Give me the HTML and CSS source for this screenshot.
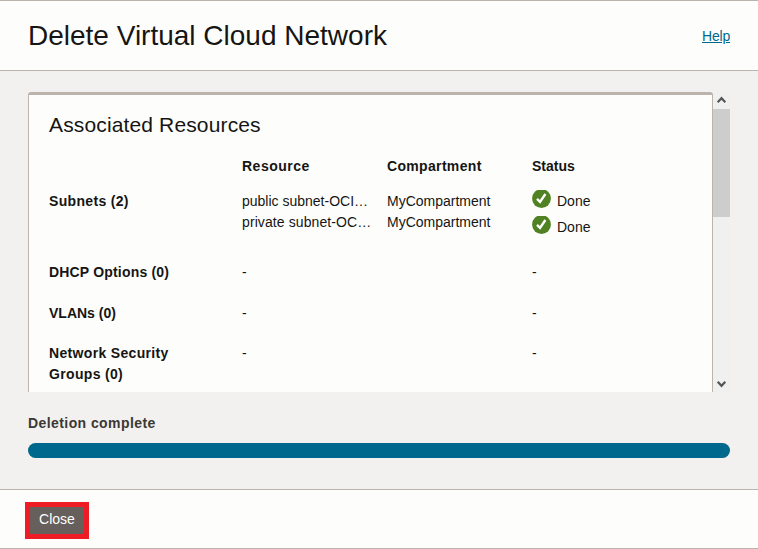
FILE: index.html
```html
<!DOCTYPE html>
<html lang="en">
<head>
<meta charset="utf-8">
<title>Delete Virtual Cloud Network</title>
<link rel="stylesheet" href="styles.css">
</head>
<body>
<div class="dialog">
  <header class="header">
    <h1>Delete Virtual Cloud Network</h1>
    <a class="help" href="#">Help</a>
  </header>
  <main class="content">
    <div class="scroller">
      <section class="panel">
        <h2>Associated Resources</h2>
        <div class="grid head">
          <span></span><b class="wide">Resource</b><b>Compartment</b><b class="tight">Status</b>
        </div>
        <div class="grid subnets">
          <b>Subnets (2)</b>
          <div><p>public subnet-OCI…</p><p class="private">private subnet-OC…</p></div>
          <div><p>MyCompartment</p><p>MyCompartment</p></div>
          <div>
            <div class="status"><svg viewBox="0 0 19 18"><circle cx="9.5" cy="8.5" r="9.4"/><path d="M5 8.9l3 3L13.4 4"/></svg><span>Done</span></div>
            <div class="status"><svg viewBox="0 0 19 18"><circle cx="9.5" cy="8.5" r="9.4"/><path d="M5 8.9l3 3L13.4 4"/></svg><span>Done</span></div>
          </div>
        </div>
        <div class="grid dhcp"><b class="snug">DHCP Options (0)</b><span>-</span><span></span><span>-</span></div>
        <div class="grid vlans"><b class="tight">VLANs (0)</b><span>-</span><span></span><span>-</span></div>
        <div class="grid"><b>Network Security Groups (0)</b><span>-</span><span></span><span>-</span></div>
      </section>
      <div class="scrollbar">
        <svg viewBox="0 0 17 17"><path d="M4.7 10.2l3.8-4 3.8 4"/></svg>
        <div class="thumb"></div>
        <svg class="down" viewBox="0 0 17 17"><path d="M4.7 6.8l3.8 4 3.8-4"/></svg>
      </div>
    </div>
    <p class="message">Deletion complete</p>
    <div class="progress"></div>
  </main>
  <footer class="footer"><button class="close">Close</button></footer>
</div>
</body>
</html>
```
FILE: styles.css
```css
* { box-sizing: border-box; }
body {
  margin: 0;
  font: 14px/21px "Liberation Sans", Arial, sans-serif;
  color: #161513;
  background: #fdfefc;
}
h1, h2, p { margin: 0; font-weight: 400; }
b { letter-spacing: 0.33px; }
b.wide { letter-spacing: 0.5px; }
b.snug { letter-spacing: 0.18px; }
b.tight { letter-spacing: 0; }
.dialog {
  height: 549px;
  display: flex;
  flex-direction: column;
  border-top: 1px solid #bbb3ac;
  border-bottom: 1px solid #bbb3ac;
}
.header {
  height: 70px;
  padding: 0 28px;
  display: flex;
  align-items: center;
  justify-content: space-between;
  border-bottom: 1px solid #bbb3ac;
}
h1 { font-size: 28px; line-height: 36px; }
.help { margin-top: 2px; color: #00688c; letter-spacing: -0.2px; }
.content {
  height: 418px;
  padding: 21px 28px 0;
  background: #f3f1f0;
}
.scroller { height: 300px; display: flex; overflow: hidden; }
.panel {
  width: 685px;
  height: 320px;
  padding: 17px 20px 0;
  background: #fdfefc;
  border: 1px solid #bbb3ac;
  border-top-width: 3px;
  border-radius: 3px 3px 0 0;
}
h2 { font-size: 21px; line-height: 26px; letter-spacing: 0.14px; }
.grid { display: grid; grid-template-columns: 193px 145px 145px 120px; }
.grid > b:first-child { padding-right: 60px; }
.head { margin-top: 18px; }
.subnets { height: 50px; margin-top: 14px; }
.private { letter-spacing: 0.1px; }
.status { height: 26px; display: flex; gap: 6px; }
.status svg { width: 19px; height: 18px; margin-top: -1px; fill: #508223; }
.status path { fill: none; stroke: #fff; stroke-width: 2.4; }
.dhcp { margin-top: 21px; }
.vlans { margin: 20px 0 19px; }
.scrollbar {
  width: 17px;
  height: 300px;
  display: flex;
  flex-direction: column;
  background: #f0f0f0;
}
.scrollbar svg { width: 17px; height: 17px; fill: none; stroke: #555; stroke-width: 2.2; }
.thumb { height: 108px; background: #cdcdcd; }
.down { margin-top: auto; }
.message { margin-top: 21px; color: #3b3835; font-weight: 700; letter-spacing: 0.42px; }
.progress { height: 15px; margin-top: 9px; border-radius: 8px; background: #00688c; }
.footer { flex: 1; padding: 12px 25px 0; border-top: 1px solid #bbb3ac; }
.close {
  display: block;
  width: 64px;
  height: 37px;
  padding: 0 0 2px;
  border: 5px solid #ee1c24;
  background: #665f5b;
  color: #fff;
  font: inherit;
}
```
